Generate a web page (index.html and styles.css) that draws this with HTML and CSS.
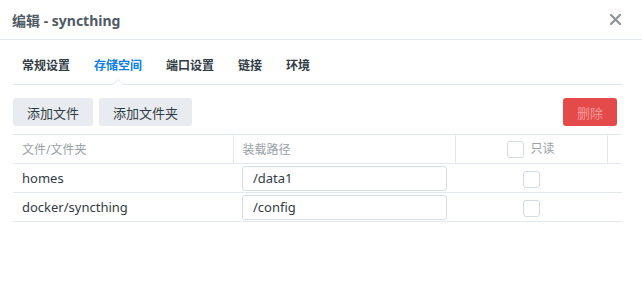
FILE: index.html
```html
<!DOCTYPE html>
<html lang="zh-CN">
<head>
    <meta charset="UTF-8">
    <title>编辑 - syncthing</title>
    <link rel="stylesheet" href="styles.css">
</head>
<body>
    <div class="dialog">
        <div class="dialog-header">
            <span class="dialog-title">编辑 - syncthing</span>
            <span class="close-button">
                <svg width="11" height="11" viewBox="0 0 11 11"><path d="M1 1 L10 10 M10 1 L1 10" stroke="#8c939b" stroke-width="2.2" stroke-linecap="square"/></svg>
            </span>
        </div>
        <div class="dialog-body">
            <div class="tabs">
                <span class="tab">常规设置</span>
                <span class="tab active">存储空间</span>
                <span class="tab">端口设置</span>
                <span class="tab">链接</span>
                <span class="tab">环境</span>
            </div>
            <div class="toolbar">
                <button class="btn">添加文件</button>
                <button class="btn">添加文件夹</button>
                <button class="btn btn-danger" disabled>删除</button>
            </div>
            <table class="mounts">
                <colgroup>
                    <col class="col-file">
                    <col class="col-path">
                    <col class="col-ro">
                    <col class="col-end">
                </colgroup>
                <thead>
                    <tr>
                        <th>文件/文件夹</th>
                        <th>装载路径</th>
                        <th class="center"><span class="check"></span>只读</th>
                        <th></th>
                    </tr>
                </thead>
                <tbody>
                    <tr>
                        <td>homes</td>
                        <td class="path-cell"><input class="path-input" type="text" value="/data1"></td>
                        <td class="center"><span class="check"></span></td>
                        <td></td>
                    </tr>
                    <tr>
                        <td>docker/syncthing</td>
                        <td class="path-cell"><input class="path-input" type="text" value="/config"></td>
                        <td class="center"><span class="check"></span></td>
                        <td></td>
                    </tr>
                </tbody>
            </table>
        </div>
    </div>
</body>
</html>
```

FILE: styles.css
```css
body {
    margin: 0;
    background-color: white;
    font-family: "Noto Sans", "Noto Sans CJK SC", sans-serif;
    color: #323c46;
}
.dialog {
    width: 642px;
    height: 306px;
    background-color: white;
}
.dialog-header {
    height: 39px;
    border-bottom: 1px solid #e3e8ee;
    display: flex;
    align-items: center;
    justify-content: space-between;
    padding: 0 20px 0 12px;
}
.dialog-title {
    font-size: 14px;
    font-weight: bold;
    color: #505a64;
}
.close-button {
    display: flex;
    margin-right: 1px;
}
.dialog-body {
    padding: 0 20px 0 13px;
}
.tabs {
    display: flex;
    gap: 24px;
    padding: 18px 0 0 9px;
    border-bottom: 1px solid #dfe5ec;
}
.tab {
    font-size: 12px;
    line-height: 16px;
    font-weight: bold;
    color: #323c46;
    padding-bottom: 10px;
    position: relative;
}
.tab.active {
    color: #0a80e8;
}
.tab.active::before,
.tab.active::after {
    content: "";
    position: absolute;
    left: 50%;
    margin-left: -6px;
    border: 6px solid transparent;
    border-top: 0;
}
.tab.active::before {
    bottom: -1px;
    border-bottom-color: #dfe5ec;
}
.tab.active::after {
    bottom: -2px;
    border-bottom-color: white;
}
.toolbar {
    display: flex;
    gap: 6px;
    margin-top: 13px;
}
.btn {
    height: 28px;
    padding: 0 14px;
    border: none;
    border-radius: 3px;
    background-color: #e8ecf0;
    color: #323c46;
    font-family: inherit;
    font-size: 13px;
}
.btn-danger {
    margin-left: auto;
    margin-right: 5px;
    background-color: #e54a4a;
    color: #f29a9a;
}
.mounts {
    width: 609px;
    margin-top: 8px;
    border-collapse: collapse;
    table-layout: fixed;
    font-size: 13px;
}
.col-file {
    width: 220px;
}
.col-path {
    width: 222px;
}
.col-ro {
    width: 152px;
}
.col-end {
    width: 15px;
}
.mounts th,
.mounts td {
    height: 28px;
    padding: 0 9px;
    text-align: left;
    white-space: nowrap;
    border-bottom: 1px solid #e3e8ee;
}
.mounts th {
    border-top: 1px solid #e3e8ee;
    border-left: 1px solid #e3e8ee;
    font-size: 12px;
    font-weight: normal;
    color: #9aa1a8;
}
.mounts th:first-child {
    border-left: none;
}
.mounts .center {
    text-align: center;
}
.mounts td.path-cell {
    padding: 0 8px 0 9px;
}
.path-input {
    box-sizing: border-box;
    width: 205px;
    height: 25px;
    border: 1px solid #d5dde6;
    border-radius: 3px;
    padding: 0 10px;
    font-family: inherit;
    font-size: 13px;
    color: #323c46;
    display: block;
}
.check {
    display: inline-block;
    box-sizing: border-box;
    width: 17px;
    height: 17px;
    border: 1px solid #d3dbe4;
    border-radius: 3px;
    vertical-align: middle;
    background: white;
}
th .check {
    margin-right: 6px;
    position: relative;
    top: -1px;
}
```
